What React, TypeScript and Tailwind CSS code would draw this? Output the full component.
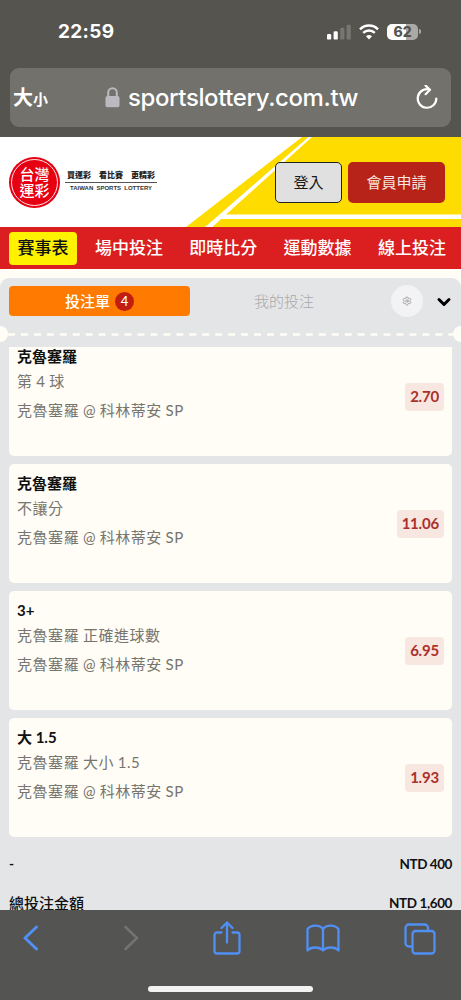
import React from 'react';
import { ChevronDown, Settings } from 'lucide-react';

interface Bet {
  id: number;
  pick: string;
  market: string;
  match: string;
  odds: string;
}

const navItems = [
  { id: 'live', label: '場中投注' },
  { id: 'scores', label: '即時比分' },
  { id: 'stats', label: '運動數據' },
  { id: 'online', label: '線上投注' },
];

const bets: Bet[] = [
  { id: 1, pick: '克魯塞羅', market: '第 4 球', match: '克魯塞羅 @ 科林蒂安 SP', odds: '2.70' },
  { id: 2, pick: '克魯塞羅', market: '不讓分', match: '克魯塞羅 @ 科林蒂安 SP', odds: '11.06' },
  { id: 3, pick: '3+', market: '克魯塞羅 正確進球數', match: '克魯塞羅 @ 科林蒂安 SP', odds: '6.95' },
  { id: 4, pick: '大 1.5', market: '克魯塞羅 大小 1.5', match: '克魯塞羅 @ 科林蒂安 SP', odds: '1.93' },
];

const StatusBar = () => (
  <div className="flex h-[68px] items-center justify-between pb-[5px] pl-[58px] pr-10">
    <span className="text-[19px] font-bold leading-6 tracking-[0.3px]">22:59</span>
    <div className="flex items-center">
      <svg width="24" height="16" viewBox="0 0 24 16" fill="white">
        <rect x="0" y="10" width="4.2" height="5.6" rx="1.2" />
        <rect x="6.6" y="7.2" width="4.2" height="8.4" rx="1.2" />
        <rect x="13.2" y="3.8" width="4.2" height="11.8" rx="1.2" opacity="0.2" />
        <rect x="19.6" y="0.8" width="4.2" height="14.8" rx="1.2" opacity="0.2" />
      </svg>
      <svg className="ml-2" width="20" height="16" viewBox="0 0 20 16" fill="none" stroke="white" strokeWidth="2.5">
        <path d="M1 5.3C6 .3 14 .3 19 5.3" />
        <path d="M4.2 8.9c3.3-3.2 8.3-3.2 11.6 0" />
        <path d="M10 15.4l-3-3.2c1.7-1.5 4.3-1.5 6 0z" fill="white" stroke="none" />
      </svg>
      <div className="ml-2 flex h-4 w-[31px] items-center justify-center rounded-[5px] bg-linear-to-r from-white from-62% to-[#aaa9a6] to-62% text-[14px] font-extrabold leading-4 text-[#55544f]">
        62
      </div>
      <div className="ml-[1px] h-[5px] w-[2px] rounded-r-full bg-[#aaa9a6]" />
    </div>
  </div>
);

const AddressBar = () => (
  <div className="mx-[10px] flex h-[59px] items-center rounded-[9px] bg-[#72716b] pl-[3px] pr-[13px]">
    <div className="flex w-[92px] shrink-0 items-baseline font-['Noto_Sans_CJK_TC',sans-serif] font-bold leading-6">
      <span className="text-[20px]">大</span>
      <span className="text-[15px]">小</span>
    </div>
    <svg className="shrink-0" width="15" height="21" viewBox="0 0 15 21">
      <path d="M3.2 10V5.6a4.3 4.3 0 0 1 8.6 0V10" fill="none" stroke="#bcb9c0" strokeWidth="2" />
      <rect x="0.5" y="9" width="14" height="11.2" rx="2" fill="#bcb9c0" />
    </svg>
    <span className="ml-[8px] whitespace-nowrap text-[24px] font-medium leading-7 tracking-[-0.4px]">sportslottery.com.tw</span>
    <svg className="ml-auto shrink-0" width="22" height="26" viewBox="0 0 22 26" fill="none" stroke="white" strokeWidth="2.2" strokeLinecap="round" strokeLinejoin="round">
      <path d="M12.6 4.300A9.300 9.300 0 1 0 20.300 13.500" />
      <path d="M9.600 0.600l4.400 4.200-4.400 4.400" />
    </svg>
  </div>
);

const Banner = () => (
  <header className="relative h-[90px] bg-white">
    <svg className="absolute inset-0" width="461" height="90" viewBox="0 0 461 90">
      <path d="M186 90L302 0H461V90z" fill="#ffdc00" />
      <path d="M205 90L308.500 0H312L226 77.500H461V82H221L212.500 90z" fill="white" />
    </svg>
    <div className="relative flex h-full items-center pl-[9px] pr-4">
      <div className="flex size-[51px] items-center justify-center rounded-full bg-[#e60012] p-[2px]">
        <div className="flex size-full flex-col items-center justify-center rounded-full border border-white/90 text-[15px] font-medium leading-4 text-white">
          <span>台灣</span>
          <span>運彩</span>
        </div>
      </div>
      <div className="ml-[5px] mt-[-1px] flex w-[92px] flex-col items-center whitespace-nowrap">
        <div className="flex w-full justify-between border-b border-[#555] px-[2px] pb-[1px] text-[8px] font-black leading-[11px] text-[#222]">
          <span>買運彩</span>
          <span>看比賽</span>
          <span>更精彩</span>
        </div>
        <span className="font-['Liberation_Sans',sans-serif] text-[6px] font-bold leading-[11px] text-[#333] [word-spacing:1.5px]">
          TAIWAN SPORTS LOTTERY
        </span>
      </div>
      <button className="ml-auto h-[41px] w-[67px] rounded-[5px] border border-[#222] bg-[#e0e0e0] text-[15px] text-[#1a1a1a]">
        登入
      </button>
      <button className="ml-[6px] h-[41px] w-[97px] rounded-[5px] bg-[#b72318] text-[15px] text-[#f8e5df]">會員申請</button>
    </div>
  </header>
);

const NavBar = () => (
  <nav className="flex h-[42px] items-center bg-[#db1e1f] pl-[9px] text-[17px] font-medium text-white">
    <a className="flex h-[33px] w-[68px] items-center justify-center rounded-[4px] bg-[#fff200] text-[#111]">賽事表</a>
    <div className="ml-[18px] flex gap-[26.3px]">
      {navItems.map((item) => (
        <a key={item.id}>{item.label}</a>
      ))}
    </div>
  </nav>
);

const BetCard = ({ bet }: { bet: Bet }) => (
  <div className="flex h-[119px] shrink-0 justify-between rounded-[5px] bg-[#fffdf5] pl-2 pr-2">
    <div className="pt-[7px]">
      <div className="h-6 text-[15px] font-bold leading-6 text-[#111]">{bet.pick}</div>
      <div className="h-[29px] text-[15px] leading-[27px] tracking-[0.55px] text-[#777570] [word-spacing:-0.7px]">{bet.market}</div>
      <div className="text-[15px] leading-[27px] tracking-[0.55px] text-[#777570] [word-spacing:-0.7px]">{bet.match}</div>
    </div>
    <div className="mt-[46px] flex h-7 items-center rounded-[4px] bg-[#f8e6e0] px-[5px] pb-[2px] text-[15px] font-bold tracking-[-0.2px] text-[#ac302b]">
      {bet.odds}
    </div>
  </div>
);

const BetSlip = () => (
  <section className="flex h-[632px] flex-col overflow-hidden rounded-t-[9px] bg-[#e3e5e7]">
    <div className="flex h-[55px] shrink-0 items-center px-[9px] pb-[9px]">
      <button className="flex h-[30px] w-[181px] items-center justify-center rounded-[4px] bg-[#ff7a00] text-[15px] font-medium text-white">
        投注單
        <span className="ml-[5px] flex size-[19px] items-center justify-center rounded-full bg-[#c11d10] pt-[1px] text-[13px]">4</span>
      </button>
      <button className="w-[188px] text-[15px] font-light text-[#a9aaac]">我的投注</button>
      <div className="ml-[13px] flex size-8 items-center justify-center rounded-full bg-[#f3f3f5]">
        <Settings size={10} strokeWidth={2} className="text-[#999]" />
      </div>
      <ChevronDown size={20} strokeWidth={3.6} className="ml-auto mr-[-2px] mt-[1px] text-black" />
    </div>

    {/* Ticket perforation */}
    <div className="flex h-[14px] shrink-0 items-start justify-between">
      <div className="mt-[-7px] h-4 w-2 rounded-r-full bg-[#fffdf5]" />
      <svg width="445" height="3" viewBox="0 0 445 3">
        <path d="M0 1.5H445" stroke="#fffdf5" strokeWidth="2.6" strokeDasharray="7 5.95" />
      </svg>
      <div className="mt-[-7px] h-4 w-2 rounded-l-full bg-[#fffdf5]" />
    </div>

    <div className="h-[490px] shrink-0 overflow-hidden px-[9px]">
      <div className="mt-[-10px] flex flex-col gap-2">
        {bets.map((bet) => (
          <BetCard key={bet.id} bet={bet} />
        ))}
      </div>
    </div>

    <div className="px-[9px] text-[13.5px] font-bold text-[#111]">
      <div className="flex h-[39px] items-center justify-between pt-[15px]">
        <span>-</span>
        <span className="tracking-[-0.45px]">NTD 400</span>
      </div>
      <div className="flex h-[39px] items-center justify-between pt-[15px]">
        <span className="text-[15px] font-medium">總投注金額</span>
        <span className="tracking-[-0.4px]">NTD 1,600</span>
      </div>
    </div>
  </section>
);

const BrowserToolbar = () => (
  <footer className="h-[90px] bg-[#545452] pt-[10px]">
    <div className="flex h-9 items-center pl-[22px] text-[#508ff3]">
      <svg width="17" height="26" viewBox="0 0 17 26" fill="none" stroke="currentColor" strokeWidth="3" strokeLinecap="round" strokeLinejoin="round">
        <path d="M14.5 2L3 13l11.5 11" />
      </svg>
      <svg className="ml-[84px] text-[#737371]" width="17" height="26" viewBox="0 0 17 26" fill="none" stroke="currentColor" strokeWidth="2.6" strokeLinecap="round" strokeLinejoin="round">
        <path d="M2.5 2L14 13 2.5 24" />
      </svg>
      <svg className="ml-[73px]" width="28" height="34" viewBox="0 0 28 34" fill="none" stroke="currentColor" strokeWidth="2.3" strokeLinecap="round" strokeLinejoin="round">
        <path d="M8.5 11.5H4a2.500 2.500 0 0 0-2.500 2.500V30A2.500 2.500 0 0 0 4 32.500h20a2.500 2.500 0 0 0 2.500-2.500V14a2.500 2.500 0 0 0-2.500-2.500h-4.500" />
        <path d="M14 21.500V1.500M8.500 7L14 1.500 19.500 7" />
      </svg>
      <svg className="ml-[65px]" width="34" height="28" viewBox="0 0 34 28" fill="none" stroke="currentColor" strokeWidth="2.3" strokeLinecap="round" strokeLinejoin="round">
        <path d="M17 5C14 .4 5 .4 1.500 5V26.500C5 22.500 13.500 22.500 17 26.500C20.500 22.500 29 22.500 32.500 26.500V5C29 .4 20 .4 17 5zV26.500" />
      </svg>
      <svg className="ml-[64px] mt-[2px]" width="32" height="32" viewBox="0 0 32 32" fill="none" stroke="currentColor" strokeWidth="2.3" strokeLinejoin="round">
        <path d="M8.500 23.500H5a3.500 3.500 0 0 1-3.500-3.500V5A3.500 3.500 0 0 1 5 1.500h15.500A3.500 3.500 0 0 1 24 5v3" />
        <rect x="8.500" y="8" width="22" height="22.500" rx="3" />
      </svg>
    </div>
    <div className="mx-auto mt-[30px] h-[6px] w-[165px] rounded-full bg-[#f2f2f2]" />
  </footer>
);

export default function App() {
  return (
    <div className="h-[1000px] w-[461px] overflow-hidden bg-[#fffdf5] font-['Lato','Noto_Sans_CJK_TC',sans-serif]">
      <div className="h-[137px] bg-[#55544f] font-['Inter','Noto_Sans_CJK_TC',sans-serif] text-white">
        <StatusBar />
        <AddressBar />
      </div>
      <Banner />
      <NavBar />
      <div className="h-[9px]" />
      <BetSlip />
      <BrowserToolbar />
    </div>
  );
}
